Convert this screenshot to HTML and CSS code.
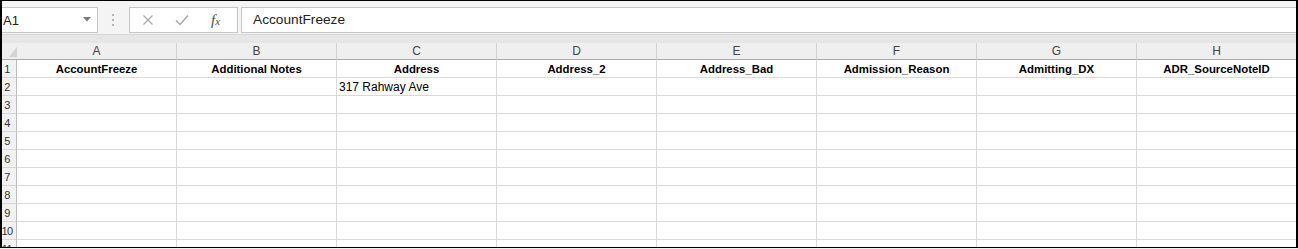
FILE: index.html
```html
<!DOCTYPE html>
<html lang="en">
<head>
  <meta charset="UTF-8">
  <title>Sheet</title>
  <link rel="stylesheet" href="styles.css">
</head>
<body>
  <div class="window">
    <div class="formula-bar">
      <div class="name-box">
        <span>A1</span>
        <svg class="drop" width="8" height="5" viewBox="0 0 8 5"><path d="M0 0h8L4 4.5z" fill="#7a7a7a"/></svg>
      </div>
      <div class="grip"><i></i><i></i><i></i></div>
      <div class="fx-buttons">
        <svg class="btn-icon" width="12" height="12" viewBox="0 0 12 12"><path d="M1.5 1.5l9 9M10.5 1.5l-9 9" stroke="#a8a8a8" stroke-width="1.3" fill="none"/></svg>
        <svg class="btn-icon" width="14" height="12" viewBox="0 0 14 12"><path d="M1 6.5l4 4L13 1.5" stroke="#a8a8a8" stroke-width="1.5" fill="none"/></svg>
        <span class="fx">f<small>x</small></span>
      </div>
      <div class="formula-input">AccountFreeze</div>
    </div>
    <div class="band"></div>
    <div class="sheet" id="sheet">
      <!-- filas generadas abajo -->
    </div>
  </div>

  <script>
    const sheet = document.getElementById('sheet');
    const letters = ['A', 'B', 'C', 'D', 'E', 'F', 'G', 'H'];
    const titles = ['AccountFreeze', 'Additional Notes', 'Address', 'Address_2', 'Address_Bad', 'Admission_Reason', 'Admitting_DX', 'ADR_SourceNoteID'];
    const rowCount = 11;

    // fila de letras
    const corner = document.createElement('div');
    corner.className = 'corner';
    corner.innerHTML = '<svg width="8" height="10" viewBox="0 0 8 10"><path d="M8 0v10H0z" fill="#d2d2d2"/></svg>';
    sheet.appendChild(corner);

    letters.forEach(l => {
      const head = document.createElement('div');
      head.className = 'col-head';
      head.textContent = l;
      sheet.appendChild(head);
    });

    for (let r = 1; r <= rowCount; r++) {
      const num = document.createElement('div');
      num.className = 'row-head';
      num.innerHTML = '<span>' + r + '</span>';
      sheet.appendChild(num);

      for (let c = 0; c < letters.length; c++) {
        const cell = document.createElement('div');
        cell.className = 'cell';
        if (r === 1) {
          cell.classList.add('title');
          cell.textContent = titles[c];
        }
        if (r === 2 && c === 2) {
          cell.textContent = '317 Rahway Ave';
        }
        sheet.appendChild(cell);
      }
    }
  </script>
</body>
</html>
```

FILE: styles.css
```css
html, body {
  margin: 0;
  background: #f0f0f0;
}

body {
  font-family: 'Liberation Sans', Arial, sans-serif;
  color: #000;
}

.window {
  box-sizing: border-box;
  width: 1298px;
  height: 248px;
  border-top: 1px solid #000;
  border-left: 2px solid #000;
  border-right: 2px solid #000;
  border-bottom: 1px solid #000;
  background: #fff;
  overflow: hidden;
}

.formula-bar {
  height: 33px;
  box-sizing: border-box;
  padding-top: 6px;
  background: #f4f4f4;
  display: flex;
  align-items: flex-start;
}

.name-box {
  box-sizing: border-box;
  width: 96px;
  height: 26px;
  background: #fff;
  border: 1px solid #c6c6c6;
  border-left: none;
  display: flex;
  align-items: center;
  justify-content: space-between;
  padding: 0 6px 0 1px;
  font-size: 13px;
  color: #222;
}

.name-box .drop {
  margin-top: -2px;
}

.grip {
  height: 26px;
  width: 2px;
  margin-left: 14px;
  display: flex;
  flex-direction: column;
  justify-content: center;
  gap: 3px;
}

.grip i {
  display: block;
  width: 2px;
  height: 2px;
  background: #b4b4b4;
}

.fx-buttons {
  box-sizing: border-box;
  width: 109px;
  height: 26px;
  margin-left: 15px;
  background: #fff;
  border: 1px solid #c6c6c6;
  display: flex;
  align-items: center;
  padding-left: 12px;
}

.btn-icon + .btn-icon {
  margin-left: 21px;
}

.fx {
  margin-left: 22px;
  font-family: 'Liberation Serif', 'Times New Roman', serif;
  font-style: italic;
  font-size: 15px;
  color: #4a4a4a;
}

.fx small {
  font-size: 11px;
}

.formula-input {
  flex: 1;
  box-sizing: border-box;
  height: 26px;
  margin-left: 3px;
  background: #fff;
  border: 1px solid #c6c6c6;
  border-right: none;
  padding-left: 11px;
  font-size: 13.7px;
  line-height: 24px;
  color: #222;
}

.band {
  height: 9px;
  box-sizing: border-box;
  border-top: 1px solid #d6d6d6;
  background: #e6e6e6;
}

.sheet {
  height: 204px;
  overflow: hidden;
  display: grid;
  grid-template-columns: 15px repeat(8, 160px);
  grid-auto-rows: 18px;
  grid-template-rows: 17px;
}

.corner {
  background: #efefef;
  border-bottom: 1px solid #ababab;
  display: flex;
  align-items: flex-end;
  justify-content: flex-end;
  padding: 0 0 2px;
  box-sizing: border-box;
}

.col-head {
  box-sizing: border-box;
  background: #efefef;
  border-bottom: 1px solid #ababab;
  border-right: 1px solid #d2d2d2;
  text-align: center;
  font-size: 12px;
  line-height: 17px;
  color: #444;
}

.row-head {
  box-sizing: border-box;
  background: #f2f2f2;
  border-right: 1px solid #bdbdbd;
  border-bottom: 1px solid #d6d6d6;
  overflow: hidden;
  font-size: 11px;
  line-height: 17px;
  letter-spacing: -0.5px;
  color: #333;
}

.row-head span {
  display: block;
  width: 14px;
  margin-left: -2px;
  padding-top: 1px;
  text-align: center;
}

.cell {
  box-sizing: border-box;
  border-right: 1px solid #d9d9d9;
  border-bottom: 1px solid #d9d9d9;
  padding: 1px 0 0 2px;
  font-size: 12px;
  line-height: 17px;
  white-space: nowrap;
  overflow: hidden;
}

.title {
  text-align: center;
  font-weight: bold;
  font-size: 11.4px;
  padding-left: 0;
}
```
